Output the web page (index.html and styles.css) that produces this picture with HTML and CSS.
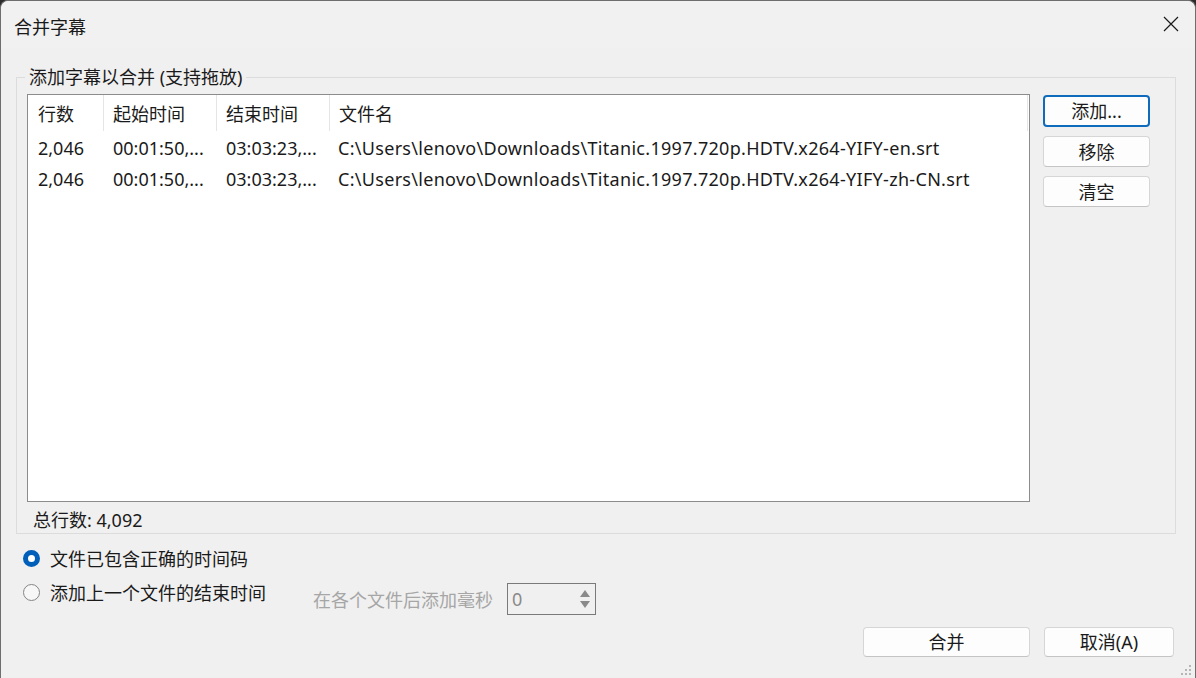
FILE: index.html
```html
<!DOCTYPE html>
<html lang="zh-CN">
<head>
<meta charset="utf-8">
<title>合并字幕</title>
<link rel="stylesheet" href="styles.css">
</head>
<body>
<div class="window">
  <div class="titlebar">
    <span class="title">合并字幕</span>
    <span class="close">
      <svg width="18" height="18" viewBox="0 0 18 18"><path d="M2 2 L16 16 M16 2 L2 16" stroke="#1a1a1a" stroke-width="1.2" fill="none"/></svg>
    </span>
  </div>

  <div class="group">
    <span class="group-label">添加字幕以合并 (支持拖放)</span>
    <div class="group-grid">
      <div class="list">
        <div class="list-head">
          <div class="hcell">行数</div>
          <div class="hcell">起始时间</div>
          <div class="hcell">结束时间</div>
          <div class="hcell">文件名</div>
        </div>
        <div class="list-body">
          <div class="row">
            <div class="cell">2,046</div>
            <div class="cell">00:01:50,...</div>
            <div class="cell">03:03:23,...</div>
            <div class="cell path">C:\Users\lenovo\Downloads\Titanic.1997.720p.HDTV.x264-YIFY-en.srt</div>
          </div>
          <div class="row">
            <div class="cell">2,046</div>
            <div class="cell">00:01:50,...</div>
            <div class="cell">03:03:23,...</div>
            <div class="cell path">C:\Users\lenovo\Downloads\Titanic.1997.720p.HDTV.x264-YIFY-zh-CN.srt</div>
          </div>
        </div>
      </div>
      <div class="side-buttons">
        <button class="btn btn-side btn-focus">添加...</button>
        <button class="btn btn-side">移除</button>
        <button class="btn btn-side">清空</button>
      </div>
      <div class="total">总行数: 4,092</div>
    </div>
  </div>

  <div class="options">
    <div class="opt-row">
      <span class="radio checked"></span>
      <span class="opt-text">文件已包含正确的时间码</span>
    </div>
    <div class="opt-row opt-row2">
      <div class="opt-item">
        <span class="radio"></span>
        <span class="opt-text">添加上一个文件的结束时间</span>
      </div>
      <div class="spin-group">
        <span class="spin-label">在各个文件后添加毫秒</span>
        <div class="spin">
          <span class="spin-value">0</span>
          <svg class="spin-arrows" width="12" height="22" viewBox="0 0 12 22"><path d="M6 2 L11 9 L1 9 Z" fill="#8a8a8a"/><path d="M1 13 L11 13 L6 20 Z" fill="#8a8a8a"/></svg>
        </div>
      </div>
    </div>
  </div>

  <div class="footer">
    <button class="btn btn-merge">合并</button>
    <button class="btn btn-cancel">取消(A)</button>
  </div>

  <svg class="grip" width="14" height="14" viewBox="0 0 14 14">
    <rect x="10" y="2" width="2" height="2" fill="#b5b5b5"/>
    <rect x="6" y="6" width="2" height="2" fill="#b5b5b5"/>
    <rect x="10" y="6" width="2" height="2" fill="#b5b5b5"/>
    <rect x="2" y="10" width="2" height="2" fill="#b5b5b5"/>
    <rect x="6" y="10" width="2" height="2" fill="#b5b5b5"/>
    <rect x="10" y="10" width="2" height="2" fill="#b5b5b5"/>
  </svg>
</div>
</body>
</html>
```

FILE: styles.css
```css
* { box-sizing: border-box; }

html, body {
  margin: 0;
  padding: 0;
  background: #2b2b2b;
}

body {
  width: 1196px;
  height: 678px;
  overflow: hidden;
  font-family: "Noto Sans", "Noto Sans CJK SC", sans-serif;
  font-size: 18px;
  color: #1a1a1a;
}

.window {
  position: relative;
  width: 1196px;
  height: 678px;
  background: #f0f0f0;
  border: 1px solid #6e6e6e;
  border-bottom: none;
  border-radius: 8px 8px 0 0;
  display: flex;
  flex-direction: column;
}

.titlebar {
  height: 47px;
  flex: none;
  display: flex;
  align-items: center;
  justify-content: space-between;
  padding: 0 15px 0 13px;
  background: #f1f1f1;
  border-radius: 8px 8px 0 0;
}

.title {
  font-family: "Noto Sans CJK SC", sans-serif;
  font-size: 18px;
  line-height: 24px;
  margin-top: 2px;
}

.close {
  display: flex;
  width: 18px;
  height: 18px;
  margin-top: -2px;
}

.group {
  position: relative;
  margin: 29px 19px 0 15px;
  border: 1px solid #dcdcdc;
  padding: 16px 25px 0 10px;
  height: 457px;
}

.group-label {
  position: absolute;
  top: -13px;
  left: 8px;
  padding: 0 4px;
  background: #f0f0f0;
  font-family: "Noto Sans", "Noto Sans CJK SC", sans-serif;
  font-size: 18px;
  line-height: 24px;
}

.group-grid {
  display: grid;
  grid-template-columns: 1003px 107px;
  grid-template-rows: 408px auto;
  column-gap: 13px;
}

.list {
  background: #ffffff;
  border: 1px solid #8c8c8c;
  overflow: hidden;
}

.list-head,
.row {
  display: grid;
  grid-template-columns: 76px 113px 113px 698px;
}

.list-head {
  height: 36px;
}

.hcell {
  font-family: "Noto Sans CJK SC", sans-serif;
  padding-left: 9px;
  line-height: 36px;
  border-right: 1px solid #e5e5e5;
  height: 36px;
}

.hcell:first-child {
  padding-left: 10px;
}

.list-body {
  padding-top: 2px;
}

.row {
  height: 31px;
}

.cell {
  padding-left: 9px;
  line-height: 31px;
  white-space: nowrap;
  overflow: hidden;
}

.cell:first-child {
  padding-left: 10px;
}

.cell.path {
  padding-left: 8px;
  letter-spacing: 0.3px;
}

.side-buttons {
  display: flex;
  flex-direction: column;
  gap: 9px;
  padding-top: 1px;
}

.btn {
  font-family: "Noto Sans", "Noto Sans CJK SC", sans-serif;
  font-size: 18px;
  color: #1a1a1a;
  background: #fdfdfd;
  border: 1px solid #d6d6d6;
  border-bottom-color: #c4c4c4;
  border-radius: 4px;
  padding: 0;
  line-height: 1;
}

.btn-side {
  width: 107px;
  height: 31px;
}

.btn-focus {
  border: 2px solid #0f6cbd;
  height: 32px;
}

.total {
  grid-column: 1 / 3;
  padding-left: 6px;
  line-height: 24px;
  margin-top: 6px;
}

.options {
  padding-left: 22px;
  margin-top: 14px;
}

.opt-row {
  display: flex;
  align-items: center;
  height: 20px;
}

.opt-row2 {
  margin-top: 14px;
  align-items: flex-start;
  height: auto;
}

.opt-item {
  width: 290px;
  height: 20px;
  display: flex;
  align-items: center;
}

.radio {
  width: 17px;
  height: 17px;
  border-radius: 50%;
  border: 1px solid #858585;
  background: #f7f7f7;
  flex: none;
  margin-right: 10px;
}

.radio.checked {
  border: 5px solid #005fb8;
  background: #ffffff;
}

.opt-text {
  font-family: "Noto Sans CJK SC", sans-serif;
  line-height: 20px;
}

.spin-group {
  display: flex;
  align-items: center;
  margin-top: 1px;
  gap: 14px;
}

.spin-label {
  font-family: "Noto Sans CJK SC", sans-serif;
  color: #a6a6a6;
}

.spin {
  width: 89px;
  height: 32px;
  border: 1px solid #7a7a7a;
  background: #f0f0f0;
  display: flex;
  align-items: center;
  justify-content: space-between;
  padding: 0 4px 0 4px;
}

.spin-value {
  color: #8a8a8a;
}

.footer {
  display: flex;
  justify-content: flex-end;
  gap: 14px;
  padding-right: 21px;
  margin-top: 12px;
}

.btn-merge {
  width: 167px;
  height: 30px;
}

.btn-cancel {
  width: 130px;
  height: 30px;
}

.grip {
  position: absolute;
  right: 2px;
  bottom: 1px;
}
```
